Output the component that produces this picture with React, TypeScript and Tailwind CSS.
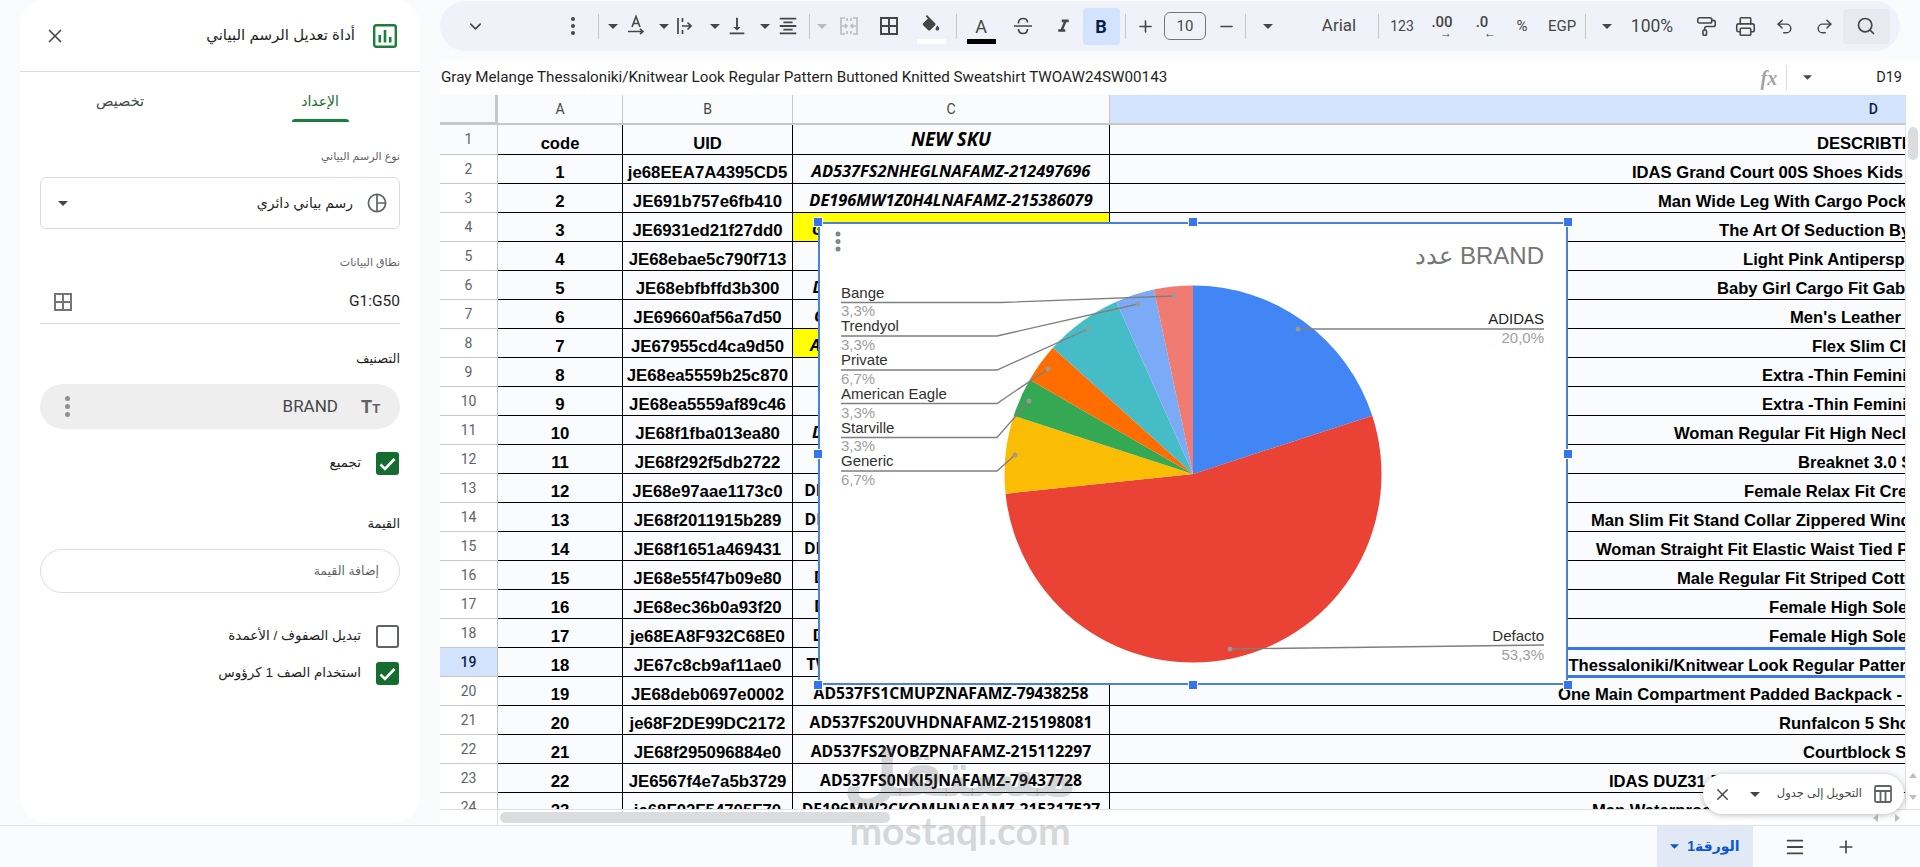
import React from "react";
import { ChevronDown, PaintRoller, Printer, Undo2, Redo2, Search, X, Plus, Minus, Menu } from "lucide-react";

const ICON = "#444746";

function Caret({ color = ICON, w = 10 }: { color?: string; w?: number }) {
  return (
    <svg width={w} height={5} viewBox="0 0 10 5" className="shrink-0">
      <polygon points="0,0 10,0 5,5" fill={color} />
    </svg>
  );
}
function Mi({ d, size = 20, color = ICON }: { d: string; size?: number; color?: string }) {
  return (
    <svg width={size} height={size} viewBox="0 0 24 24" className="shrink-0">
      <path d={d} fill={color} />
    </svg>
  );
}
const Divider = () => <div className="h-[25px] w-px shrink-0 bg-[#c7c7c7]" />;
const Txt = ({ c }: { c: string }) => <span className="whitespace-nowrap font-['Roboto',sans-serif] text-[15px] text-[#444746]">{c}</span>;

const P_VBOTTOM = "M16 13h-3V3h-2v10H8l4 4 4-4zM4 19v2h16v-2H4z";
const P_CENTER = "M7 15v2h10v-2H7zm-4 6h18v-2H3v2zm0-8h18v-2H3v2zm4-6v2h10V7H7zM3 3v2h18V3H3z";
const P_BORDERS = "M3 3v18h18V3H3zm8 16H5v-6h6v6zm0-8H5V5h6v6zm8 8h-6v-6h6v6zm0-8h-6V5h6v6z";
const P_FILL = "M16.56 8.94L7.62 0 6.21 1.41l2.38 2.38-5.15 5.15c-.59.59-.59 1.54 0 2.12l5.5 5.5c.29.29.68.44 1.06.44s.77-.15 1.06-.44l5.5-5.5c.59-.58.59-1.53 0-2.12zM19 11.5s-2 2.17-2 3.5c0 1.1.9 2 2 2s2-.9 2-2c0-1.33-2-3.5-2-3.5z";
const P_ITALIC = "M10 4v3h2.21l-3.42 8H6v3h8v-3h-2.21l3.42-8H18V4z";

const RotateIcon = () => (
  <svg width="20" height="24" viewBox="0 0 20 24" className="shrink-0" fill="none" stroke={ICON} strokeWidth="1.6">
    <path d="M6 13 L10 2.5 L14 13 M7.3 9.5 H12.7" />
    <path d="M2 17.5 H17 M14 14.8 L17 17.5 L14 20.2" />
  </svg>
);
const WrapIcon = () => (
  <svg width="18" height="22" viewBox="0 0 18 22" className="shrink-0" fill="none" stroke={ICON} strokeWidth="1.7">
    <path d="M2 3 V19 M6 11 H15 M11.5 7.5 L15 11 L11.5 14.5 M6.5 3 V7 M6.5 15 V19" />
  </svg>
);
const MergeIcon = () => (
  <svg width="20" height="20" viewBox="0 0 20 20" className="shrink-0" fill="none" stroke="#b9bcbf" strokeWidth="1.6">
    <path d="M6 2 H2 V18 H6 M14 2 H18 V18 H14 M8 2 V5 M8 15 V18 M12 2 V5 M12 15 V18" />
    <path d="M3 10 H8 M6 8 L8 10 L6 12 M17 10 H12 M14 8 L12 10 L14 12" />
  </svg>
);
const StrikeIcon = () => (
  <svg width="22" height="22" viewBox="0 0 22 22" className="shrink-0" fill="none" stroke={ICON} strokeWidth="1.7">
    <path d="M2 11 H20 M6.5 8.5 C6 5 9 3.5 11 3.5 C13.5 3.5 15.5 5 15.5 7.5 M15.5 14 C15.5 17 13.5 18.5 11 18.5 C8.5 18.5 6.5 17 6.5 14" />
  </svg>
);

function ColorTool({ bar, children }: { bar: string; children: React.ReactNode }) {
  return (
    <div className="flex h-[36px] w-[29px] shrink-0 flex-col items-center justify-end pt-[2px]">
      <div className="mb-[1px] flex h-[24px] items-center justify-center">{children}</div>
      <div className={`h-[5px] w-[29px] ${bar}`} />
    </div>
  );
}

const tools: [number, React.ReactNode][] = [
  [475, <ChevronDown size={19} color={ICON} strokeWidth={2} />],
  [573, <div className="flex flex-col gap-[3px]"><i className="size-[4px] rounded-full bg-[#444746]" /><i className="size-[4px] rounded-full bg-[#444746]" /><i className="size-[4px] rounded-full bg-[#444746]" /></div>],
  [598.5, <Divider />],
  [613, <Caret />],
  [636, <RotateIcon />],
  [664, <Caret />],
  [685, <WrapIcon />],
  [715, <Caret />],
  [737, <Mi d={P_VBOTTOM} size={22} />],
  [765, <Caret />],
  [788, <Mi d={P_CENTER} size={22} />],
  [809.5, <Divider />],
  [822, <Caret color="#b9bcbf" />],
  [849, <MergeIcon />],
  [889, <Mi d={P_BORDERS} size={24} />],
  [931, <ColorTool bar="bg-white"><Mi d={P_FILL} size={22} /></ColorTool>],
  [956, <Divider />],
  [981, <ColorTool bar="bg-black"><span className="font-['Roboto',sans-serif] text-[18px] text-[#444746]">A</span></ColorTool>],
  [1023, <StrikeIcon />],
  [1063, <Mi d={P_ITALIC} size={21} />],
  [1101, <div className="flex h-[37px] w-[37px] items-center justify-center rounded-[4px] bg-[#d3e3fd] font-['Roboto',sans-serif] text-[18px] font-bold text-[#041e49]">B</div>],
  [1125, <Divider />],
  [1145.5, <Plus size={19} color={ICON} strokeWidth={2} />],
  [1185, <div className="flex h-[28px] w-[42px] items-center justify-center rounded-[6px] border border-[#747775] font-['Roboto',sans-serif] text-[15px] text-[#444746]">10</div>],
  [1226, <Minus size={19} color={ICON} strokeWidth={2} />],
  [1245.5, <Divider />],
  [1268, <Caret />],
  [1339, <span className="font-['Roboto',sans-serif] text-[17px] text-[#444746]">Arial</span>],
  [1378, <Divider />],
  [1402, <span className="font-['Roboto',sans-serif] text-[14px] text-[#444746]">123</span>],
  [1442, <div className="flex flex-col items-center font-['Roboto',sans-serif] text-[15px] font-medium leading-[13px] text-[#444746]"><span>.00</span><span className="ml-2 text-[12px] leading-[8px]">→</span></div>],
  [1482, <div className="flex flex-col items-center font-['Roboto',sans-serif] text-[15px] font-medium leading-[13px] text-[#444746]"><span>.0</span><span className="ml-4 text-[12px] leading-[8px]">←</span></div>],
  [1522, <span className="font-['Roboto',sans-serif] text-[15px] text-[#444746]">%</span>],
  [1562, <Txt c="EGP" />],
  [1585, <Divider />],
  [1607, <Caret />],
  [1652, <span className="font-['Roboto',sans-serif] text-[17.5px] text-[#444746]">100%</span>],
  [1706, <PaintRoller size={21} color={ICON} strokeWidth={1.8} />],
  [1745, <Printer size={21} color={ICON} strokeWidth={1.8} />],
  [1784.5, <Undo2 size={19} color={ICON} strokeWidth={1.8} />],
  [1824, <Redo2 size={19} color={ICON} strokeWidth={1.8} />],
  [1866, <div className="flex h-[35px] w-[47px] items-center justify-center rounded-[4px] bg-[#e7ebf1]"><Search size={20} color={ICON} strokeWidth={2} /></div>],
];

function Toolbar() {
  return (
    <div className="mt-px flex h-[50px] w-[1460px] shrink-0 items-center rounded-[25px] bg-[#eff3f9]">
      {tools.map(([c, node], i) => (
        <div key={i} style={{ width: c - (i ? tools[i - 1][0] : 440) }} className="flex h-full shrink-0 items-center justify-end">
          <div className="flex w-0 items-center justify-center [&>*]:shrink-0">{node}</div>
        </div>
      ))}
    </div>
  );
}

type Row = [string, string, string, string, number];
const rows: Row[] = [
  ["1", "je68EEA7A4395CD5", "AD537FS2NHEGLNAFAMZ-212497696", "IDAS Grand Court 00S Shoes Kids", 1632],
  ["2", "JE691b757e6fb410", "DE196MW1Z0H4LNAFAMZ-215386079", "Man Wide Leg With Cargo Pockets Jeans", 1658],
  ["3", "JE6931ed21f27dd0", "GE358BE1XK4NANAFAMZ-213497721", "The Art Of Seduction By Kilian", 1719],
  ["4", "JE68ebae5c790f713", "SC862BE0SHLRNAFAMZ-21538612", "Light Pink Antiperspirant", 1743],
  ["5", "JE68ebfbffd3b300", "DE196KD0YTP2HNAFAMZ-215386417", "Baby Girl Cargo Fit Gabardine", 1717],
  ["6", "JE69660af56a7d50", "GE358FM1XWK2LNAFAMZ-21530982", "Men's Leather Belt", 1790],
  ["7", "JE67955cd4ca9d50", "AD537FS2KDPVMNAFAMZ-215317204", "Flex Slim Chino", 1812],
  ["8", "JE68ea5559b25c870", "SC862BE0TRQPNAFAMZ-2153862", "Extra -Thin Feminine", 1762],
  ["9", "JE68ea5559af89c46", "SC862BE0TRQRNAFAMZ-2153863", "Extra -Thin Feminine", 1762],
  ["10", "JE68f1fba013ea80", "DE196WW0XOPLRNAFAMZ-21538607", "Woman Regular Fit High Neck", 1674],
  ["11", "JE68f292f5db2722", "AD537FS2TWLKNAFAMZ-21511229", "Breaknet 3.0 Shoes", 1798],
  ["12", "JE68e97aae1173c0", "DE196WC0HLGMQNAFAMZ-215386019", "Female Relax Fit Crew", 1744],
  ["13", "JE68f2011915b289", "DE196MW1DRXQTNAFAMZ-215317510", "Man Slim Fit Stand Collar Zippered Windbreaker", 1591],
  ["14", "JE68f1651a469431", "DE196WW2HNVSGNAFAMZ-215386208", "Woman Straight Fit Elastic Waist Tied Pants", 1596],
  ["15", "JE68e55f47b09e80", "DE196MT1PZQKNAFAMZ-215317422", "Male Regular Fit Striped Cotton", 1677],
  ["16", "JE68ec36b0a93f20", "DE196WS0GBRTLNAFAMZ-21531744", "Female High Sole Sneakers", 1769],
  ["17", "je68EA8F932C68E0", "DE196WS0GBRULNAFAMZ-21531745", "Female High Sole Sneakers", 1769],
  ["18", "JE67c8cb9af11ae0", "TW029MW1LKDWNAFAMZ-215317633", "Gray Melange Thessaloniki/Knitwear Look Regular Pattern Buttoned", 1455],
  ["19", "JE68deb0697e0002", "AD537FS1CMUPZNAFAMZ-79438258", "One Main Compartment Padded Backpack - Black", 1558],
  ["20", "je68F2DE99DC2172", "AD537FS20UVHDNAFAMZ-215198081", "Runfalcon 5 Shoes", 1779],
  ["21", "JE68f295096884e0", "AD537FS2VOBZPNAFAMZ-215112297", "Courtblock Shoes", 1803],
  ["22", "JE6567f4e7a5b3729", "AD537FS0NKI5JNAFAMZ-79437728", "IDAS DUZ31 Running Shoes Cloud", 1609],
  ["23", "je68F02F54705F70", "DE196MW2CKOMHNAFAMZ-215317527", "Man Waterproof Hooded Puffer Jacket", 1592],
];

const cellBase = "flex shrink-0 items-end justify-center overflow-hidden whitespace-nowrap border-r border-b border-black font-['Liberation_Sans',Arial,sans-serif] font-bold leading-[20px] text-black";
const numBase = "flex w-[58px] shrink-0 items-center justify-center border-r border-b border-[#c4c7c5] font-['Roboto',sans-serif] text-[14px]";
const skuBase = "flex w-[317px] shrink-0 items-end justify-center overflow-hidden whitespace-nowrap border-r border-b border-black pb-[2px] font-['Open_Sans',sans-serif] font-bold leading-[20px] text-black";

function DataRow({ r, n }: { r: Row; n: number }) {
  const yellow = n === 4 || n === 8;
  const italic = n <= 12;
  return (
    <div className="flex h-[29px] shrink-0">
      <div className={`${numBase} ${n === 19 ? "bg-[#d3e3fd] font-medium text-[#041e49]" : "bg-white text-[#5f6368]"}`}>{n}</div>
      <div className={`${cellBase} w-[125px] text-[16.8px]`}>{r[0]}</div>
      <div className={`${cellBase} w-[170px] text-[16.8px]`}>{r[1]}</div>
      <div className={`${skuBase} ${italic ? "text-[16.4px] italic" : "text-[15.7px]"} ${yellow ? "bg-[#ffff00]" : ""}`}>{r[2]}</div>
      <div style={{ paddingLeft: r[4] - 1110 }} className={`${cellBase} w-[795px] justify-start border-r-0 text-[16.6px]`}>{r[3]}</div>
    </div>
  );
}

function Grid() {
  return (
    <div className="h-[714px] w-[1465px] overflow-hidden">
      <div className="flex h-[30px] border-b-2 border-[#c7c7c7] font-['Roboto',sans-serif] text-[14px] text-[#444746]">
        <div className="h-full w-[58px] shrink-0 border-r-[3px] border-b-[1px] border-[#c7c7c7] bg-[#f8f9fa]" />
        <div className="flex w-[125px] shrink-0 items-center justify-center border-r border-[#c4c7c5]">A</div>
        <div className="flex w-[170px] shrink-0 items-center justify-center border-r border-[#c4c7c5]">B</div>
        <div className="flex w-[317px] shrink-0 items-center justify-center border-r border-[#c4c7c5]">C</div>
        <div className="flex w-[795px] shrink-0 items-center justify-end bg-[#d3e3fd] pr-[27px] font-medium text-[#041e49]">D</div>
      </div>
      <div className="flex h-[30px] shrink-0">
        <div className={`${numBase} text-[#5f6368]`}>1</div>
        <div className={`${cellBase} w-[125px] text-[16.6px]`}>code</div>
        <div className={`${cellBase} w-[170px] text-[16.6px]`}>UID</div>
        <div className="flex w-[317px] shrink-0 items-end justify-center overflow-hidden whitespace-nowrap border-r border-b border-black pb-[4px] font-['Open_Sans',sans-serif] text-[18.7px] font-bold italic leading-[22px] text-black">NEW SKU</div>
        <div className={`${cellBase} w-[795px] justify-start border-r-0 pl-[707px] text-[16.6px]`}>DESCRIBTION</div>
      </div>
      {rows.map((r, i) => (
        <DataRow key={i} r={r} n={i + 2} />
      ))}
    </div>
  );
}

const slices: [number, string][] = [
  [6, "#4285f4"],
  [16, "#ea4335"],
  [2, "#fbbc04"],
  [1, "#34a853"],
  [1, "#ff6d01"],
  [2, "#46bdc6"],
  [1, "#7baaf7"],
  [1, "#f07b72"],
];
function piePaths(cx: number, cy: number, r: number) {
  let acc = 0;
  return slices.map(([u, color]) => {
    const a0 = (acc / 30) * 2 * Math.PI;
    acc += u;
    const a1 = (acc / 30) * 2 * Math.PI;
    const p = (a: number) => `${cx + r * Math.sin(a)} ${cy - r * Math.cos(a)}`;
    return { d: `M${cx} ${cy} L${p(a0)} A${r} ${r} 0 ${u > 15 ? 1 : 0} 1 ${p(a1)} Z`, color };
  });
}

const leftLabels = [
  { t: "Bange", v: "3,3%", by: 298, vy: 316, ly: 302.5, dot: [1174, 296] },
  { t: "Trendyol", v: "3,3%", by: 331, vy: 350, ly: 336, dot: [1138, 304] },
  { t: "Private", v: "6,7%", by: 365, vy: 384, ly: 370, dot: [1088, 329] },
  { t: "American Eagle", v: "3,3%", by: 399, vy: 418, ly: 403.5, dot: [1048, 369] },
  { t: "Starville", v: "3,3%", by: 433, vy: 451, ly: 437.5, dot: [1029, 401] },
  { t: "Generic", v: "6,7%", by: 466, vy: 485, ly: 471, dot: [1015, 455] },
];

const Handle = ({ className }: { className: string }) => (
  <div className={`absolute size-[10px] border border-white bg-[#3574ee] ${className}`} />
);

function Chart() {
  const font = "'Liberation Sans', Arial, sans-serif";
  return (
    <div className="absolute left-[378px] top-[127px] h-[463px] w-[750px] border-2 border-[#4a7fdc] bg-white">
      <svg width="750" height="463" viewBox="820 224 750 463" className="absolute left-0 top-0 overflow-visible">
        {piePaths(1193, 474, 188.5).map((s, i) => (
          <path key={i} d={s.d} fill={s.color} />
        ))}
        <g fill="none" stroke="#7f7f7f" strokeWidth="1.3">
          {leftLabels.map((l, i) => (
            <polyline key={i} points={i === 0 ? `841,${l.ly} 1000,${l.ly} ${l.dot[0]},${l.dot[1]}` : `841,${l.ly} 997,${l.ly} ${l.dot[0]},${l.dot[1]}`} />
          ))}
          <polyline points="1298,329 1544,329" />
          <polyline points="1230,649 1544,645" />
        </g>
        <g fill="#9a9a9a">
          {leftLabels.map((l, i) => (
            <circle key={i} cx={l.dot[0]} cy={l.dot[1]} r="2.4" />
          ))}
          <circle cx="1298" cy="329" r="2.4" />
          <circle cx="1230" cy="649" r="2.4" />
        </g>
        <g fontFamily={font} fontSize="15">
          {leftLabels.map((l, i) => (
            <g key={i}>
              <text x="841" y={l.by} fill="#303030">{l.t}</text>
              <text x="841" y={l.vy} fill="#a0a0a0">{l.v}</text>
            </g>
          ))}
          <text x="1544" y="324" textAnchor="end" fill="#222222">ADIDAS</text>
          <text x="1544" y="343" textAnchor="end" fill="#a0a0a0">20,0%</text>
          <text x="1544" y="641" textAnchor="end" fill="#303030">Defacto</text>
          <text x="1544" y="660" textAnchor="end" fill="#a0a0a0">53,3%</text>
          <text x="1544" y="264" textAnchor="end" fontSize="24" fill="#757575">عدد BRAND</text>
        </g>
        <g fill="#80868b">
          <circle cx="838" cy="234" r="2.5" />
          <circle cx="838" cy="241.5" r="2.5" />
          <circle cx="838" cy="249" r="2.5" />
        </g>
      </svg>
      <Handle className="left-[-7px] top-[-7px]" />
      <Handle className="left-1/2 top-[-7px] -translate-x-1/2" />
      <Handle className="right-[-7px] top-[-7px]" />
      <Handle className="left-[-7px] top-1/2 -translate-y-1/2" />
      <Handle className="right-[-7px] top-1/2 -translate-y-1/2" />
      <Handle className="bottom-[-7px] left-[-7px]" />
      <Handle className="bottom-[-7px] left-1/2 -translate-x-1/2" />
      <Handle className="bottom-[-7px] right-[-7px]" />
    </div>
  );
}

function Check({ on }: { on: boolean }) {
  return on ? (
    <div className="flex size-[23px] shrink-0 items-center justify-center rounded-[3px] bg-[#146c2e]">
      <svg width="17" height="14" viewBox="0 0 17 14" fill="none" stroke="white" strokeWidth="2.6"><path d="M1.5 7.5 L6 12 L15.5 2" /></svg>
    </div>
  ) : (
    <div className="size-[23px] shrink-0 rounded-[3px] border-2 border-[#5f6368] bg-white" />
  );
}

const ar = "font-['Liberation_Sans','DejaVu_Sans',sans-serif]";

function Panel() {
  return (
    <div dir="rtl" className={`mx-[20px] flex h-[823px] w-[400px] shrink-0 flex-col rounded-[26px] bg-white ${ar}`}>
      <div className="flex h-[72px] shrink-0 items-center border-b border-[#dadce0] pr-[23px]">
        <svg width="24" height="24" viewBox="0 0 24 24" className="shrink-0">
          <rect x="1.2" y="1.2" width="21.6" height="21.6" rx="2" fill="white" stroke="#188038" strokeWidth="2.4" />
          <rect x="5.5" y="11" width="2.6" height="7.5" fill="#188038" />
          <rect x="10.7" y="6" width="2.6" height="12.5" fill="#188038" />
          <rect x="15.9" y="13" width="2.6" height="5.5" fill="#188038" />
        </svg>
        <span className="mr-[18px] text-[15px] text-[#1f1f1f]">أداة تعديل الرسم البياني</span>
        <X size={22} color="#444746" strokeWidth={1.8} className="ml-[24px] mr-auto" />
      </div>
      <div className="flex h-[50px] shrink-0">
        <div className="flex w-1/2 flex-col items-center pt-[18px]">
          <span className="h-[22px] text-[14px] font-medium leading-[22px] text-[#146c2e]">الإعداد</span>
          <div className="mt-[7px] h-[3px] w-[57px] rounded-t-[3px] bg-[#188038]" />
        </div>
        <div className="flex w-1/2 flex-col items-center pt-[18px]">
          <span className="h-[22px] text-[14.5px] leading-[22px] text-[#444746]">تخصيص</span>
        </div>
      </div>
      <div className="flex flex-col px-[20px]">
        <div className="mt-[26px] h-[16px] text-[11px] leading-[16px] text-[#5f6368]">نوع الرسم البياني</div>
        <div className="mt-[13px] flex h-[52px] items-center rounded-[6px] border border-[#dadce0] pr-[12px]">
          <svg width="20" height="20" viewBox="0 0 20 20" fill="none" stroke="#5f6368" strokeWidth="1.7" className="shrink-0">
            <circle cx="10" cy="10" r="8.6" />
            <path d="M10 1.4 V18.6 M10 10 H18.6" />
          </svg>
          <span className="mr-[14px] text-[14px] text-[#1f1f1f]">رسم بياني دائري</span>
          <div className="ml-[17px] mr-auto"><Caret w={10} /></div>
        </div>
        <div className="mt-[25px] h-[16px] text-[11px] leading-[16px] text-[#5f6368]">نطاق البيانات</div>
        <div className="mt-[10px] flex h-[44px] items-center border-b border-[#dadce0] pt-[1px]">
          <span dir="ltr" className="font-['Roboto',sans-serif] text-[15.5px] text-[#1f1f1f]">G1:G50</span>
          <div className="ml-[11px] mr-auto"><Mi d={P_BORDERS} size={24} color="#757575" /></div>
        </div>
        <div className="mt-[27px] h-[16px] text-[13px] font-medium leading-[16px] text-[#1f1f1f]">التصنيف</div>
        <div className="mt-[17px] flex h-[45px] items-center rounded-full bg-[#eeeeee] pr-[20px]">
          <span dir="ltr" className="w-[19px] font-['Roboto',sans-serif] text-[18px] font-bold leading-none text-[#5f6368]">T<span className="text-[13px]">T</span></span>
          <span dir="ltr" className="mr-[23px] font-['Roboto',sans-serif] text-[17px] text-[#444746]">BRAND</span>
          <div className="ml-[25px] mr-auto flex flex-col gap-[3px]">
            <i className="size-[5px] rounded-full bg-[#8f8f8f]" />
            <i className="size-[5px] rounded-full bg-[#8f8f8f]" />
            <i className="size-[5px] rounded-full bg-[#8f8f8f]" />
          </div>
        </div>
        <div className="mt-[23px] flex items-center pr-px">
          <Check on />
          <span className="mr-[15px] text-[13.5px] text-[#1f1f1f]">تجميع</span>
        </div>
        <div className="mt-[41px] h-[16px] text-[13px] font-medium leading-[16px] text-[#1f1f1f]">القيمة</div>
        <div className="mt-[17px] flex h-[44px] items-center rounded-full border border-[#dadce0] pr-[20px] text-[12.5px] text-[#5f6368]">إضافة القيمة</div>
        <div className="mt-[32px] flex items-center pr-px">
          <Check on={false} />
          <span className="mr-[15px] text-[13.5px] text-[#1f1f1f]">تبديل الصفوف / الأعمدة</span>
        </div>
        <div className="mt-[14px] flex items-center pr-px">
          <Check on />
          <span className="mr-[15px] text-[13.5px] text-[#1f1f1f]">استخدام الصف 1 كرؤوس</span>
        </div>
      </div>
    </div>
  );
}

function Sheet() {
  return (
    <div className="relative flex w-[1480px] shrink-0 flex-col">
      <Toolbar />
      <div className="mt-[9px] flex h-[35px] shrink-0 items-center bg-white">
        <span className="whitespace-nowrap pl-px font-['Roboto',sans-serif] text-[15.2px] text-[#1f1f1f]">Gray Melange Thessaloniki/Knitwear Look Regular Pattern Buttoned Knitted Sweatshirt TWOAW24SW00143</span>
        <span className="ml-auto font-['Liberation_Serif',serif] text-[20px] font-bold italic text-[#a0a4a8]">fx</span>
        <div className="ml-[9px] h-[25px] w-px bg-[#dadce0]" />
        <div className="ml-[16px]"><Caret w={9} /></div>
        <span className="ml-[64px] mr-[18px] font-['Roboto',sans-serif] text-[14.5px] text-[#1f1f1f]">D19</span>
      </div>
      <div className="relative flex">
        <Grid />
        <div className="relative h-[714px] w-[15px] shrink-0 border-l border-[#e0e0e0] bg-white">
          <div className="mx-auto mt-[32px] h-[33px] w-[10px] rounded-full bg-[#dadce0]" />
          <svg width="10" height="28" viewBox="0 0 10 28" className="absolute bottom-[8px] left-[2px]">
            <polygon points="5,0 9,5 1,5" fill="#bdbdbd" />
            <polygon points="5,27 9,22 1,22" fill="#bdbdbd" />
          </svg>
        </div>
        <div className="absolute left-[670px] top-[552px] h-[31px] w-[795px] border-y-[3px] border-[#3b78e7]" />
        <Chart />
      </div>
      <div className="flex h-[16px] shrink-0 items-center border-t border-[#e0e0e0] bg-white">
        <div className="h-full w-[58px] shrink-0 border-r border-[#e0e0e0]" />
        <div className="ml-[2px] h-[11px] w-[390px] rounded-full bg-[#dadce0]" />
        <svg width="30" height="8" viewBox="0 0 30 8" className="ml-[983px]">
          <polygon points="0,4 5,0 5,8" fill="#bdbdbd" />
          <polygon points="27,4 22,0 22,8" fill="#bdbdbd" />
        </svg>
      </div>
      <div className="absolute left-[1263px] top-[774px] flex h-[40px] w-[201px] items-center rounded-full bg-white shadow-[0_1px_6px_rgba(60,64,67,0.35)]">
        <X size={19} color="#444746" strokeWidth={1.8} className="ml-[10px]" />
        <div className="ml-[18px]"><Caret w={10} /></div>
        <span dir="rtl" className={`ml-[16px] w-[86px] whitespace-nowrap text-[11.5px] text-[#444746] ${ar}`}>التحويل إلى جدول</span>
        <svg width="20" height="20" viewBox="0 0 20 20" fill="none" stroke="#5f6368" strokeWidth="1.8" className="ml-[11px]">
          <rect x="2" y="2" width="16" height="16" rx="1.5" />
          <path d="M2 7 H18 M7.5 7 V18 M12.5 7 V18" />
        </svg>
      </div>
    </div>
  );
}

export default function App() {
  return (
    <div className="relative h-[867px] w-[1920px] overflow-hidden bg-[#f9fbfd]">
      <div className="flex h-[825px]">
        <Panel />
        <Sheet />
      </div>
      <div className="flex h-[42px] items-center justify-end border-t border-[#e0e3e7]">
        <div className={`flex h-full w-[96px] items-center justify-center gap-[8px] bg-[#e1e9f7] text-[14px] font-bold text-[#0b57d0] ${ar}`}>
          <Caret color="#0b57d0" w={9} />
          <span dir="rtl">الورقة1</span>
        </div>
        <Menu size={22} color="#444746" strokeWidth={2} className="ml-[31px]" />
        <Plus size={20} color="#444746" strokeWidth={2} className="ml-[30px] mr-[64px]" />
      </div>
      <div className="pointer-events-none absolute left-[846px] top-[738px] flex w-[228px] flex-col items-center text-[rgba(110,110,110,0.26)]">
        <span className={`text-[64px] font-bold leading-[72px] ${ar}`}>مستقل</span>
        <span className="mt-[-2px] font-['Lato',sans-serif] text-[39px] font-bold leading-[44px]">mostaql.com</span>
      </div>
    </div>
  );
}
